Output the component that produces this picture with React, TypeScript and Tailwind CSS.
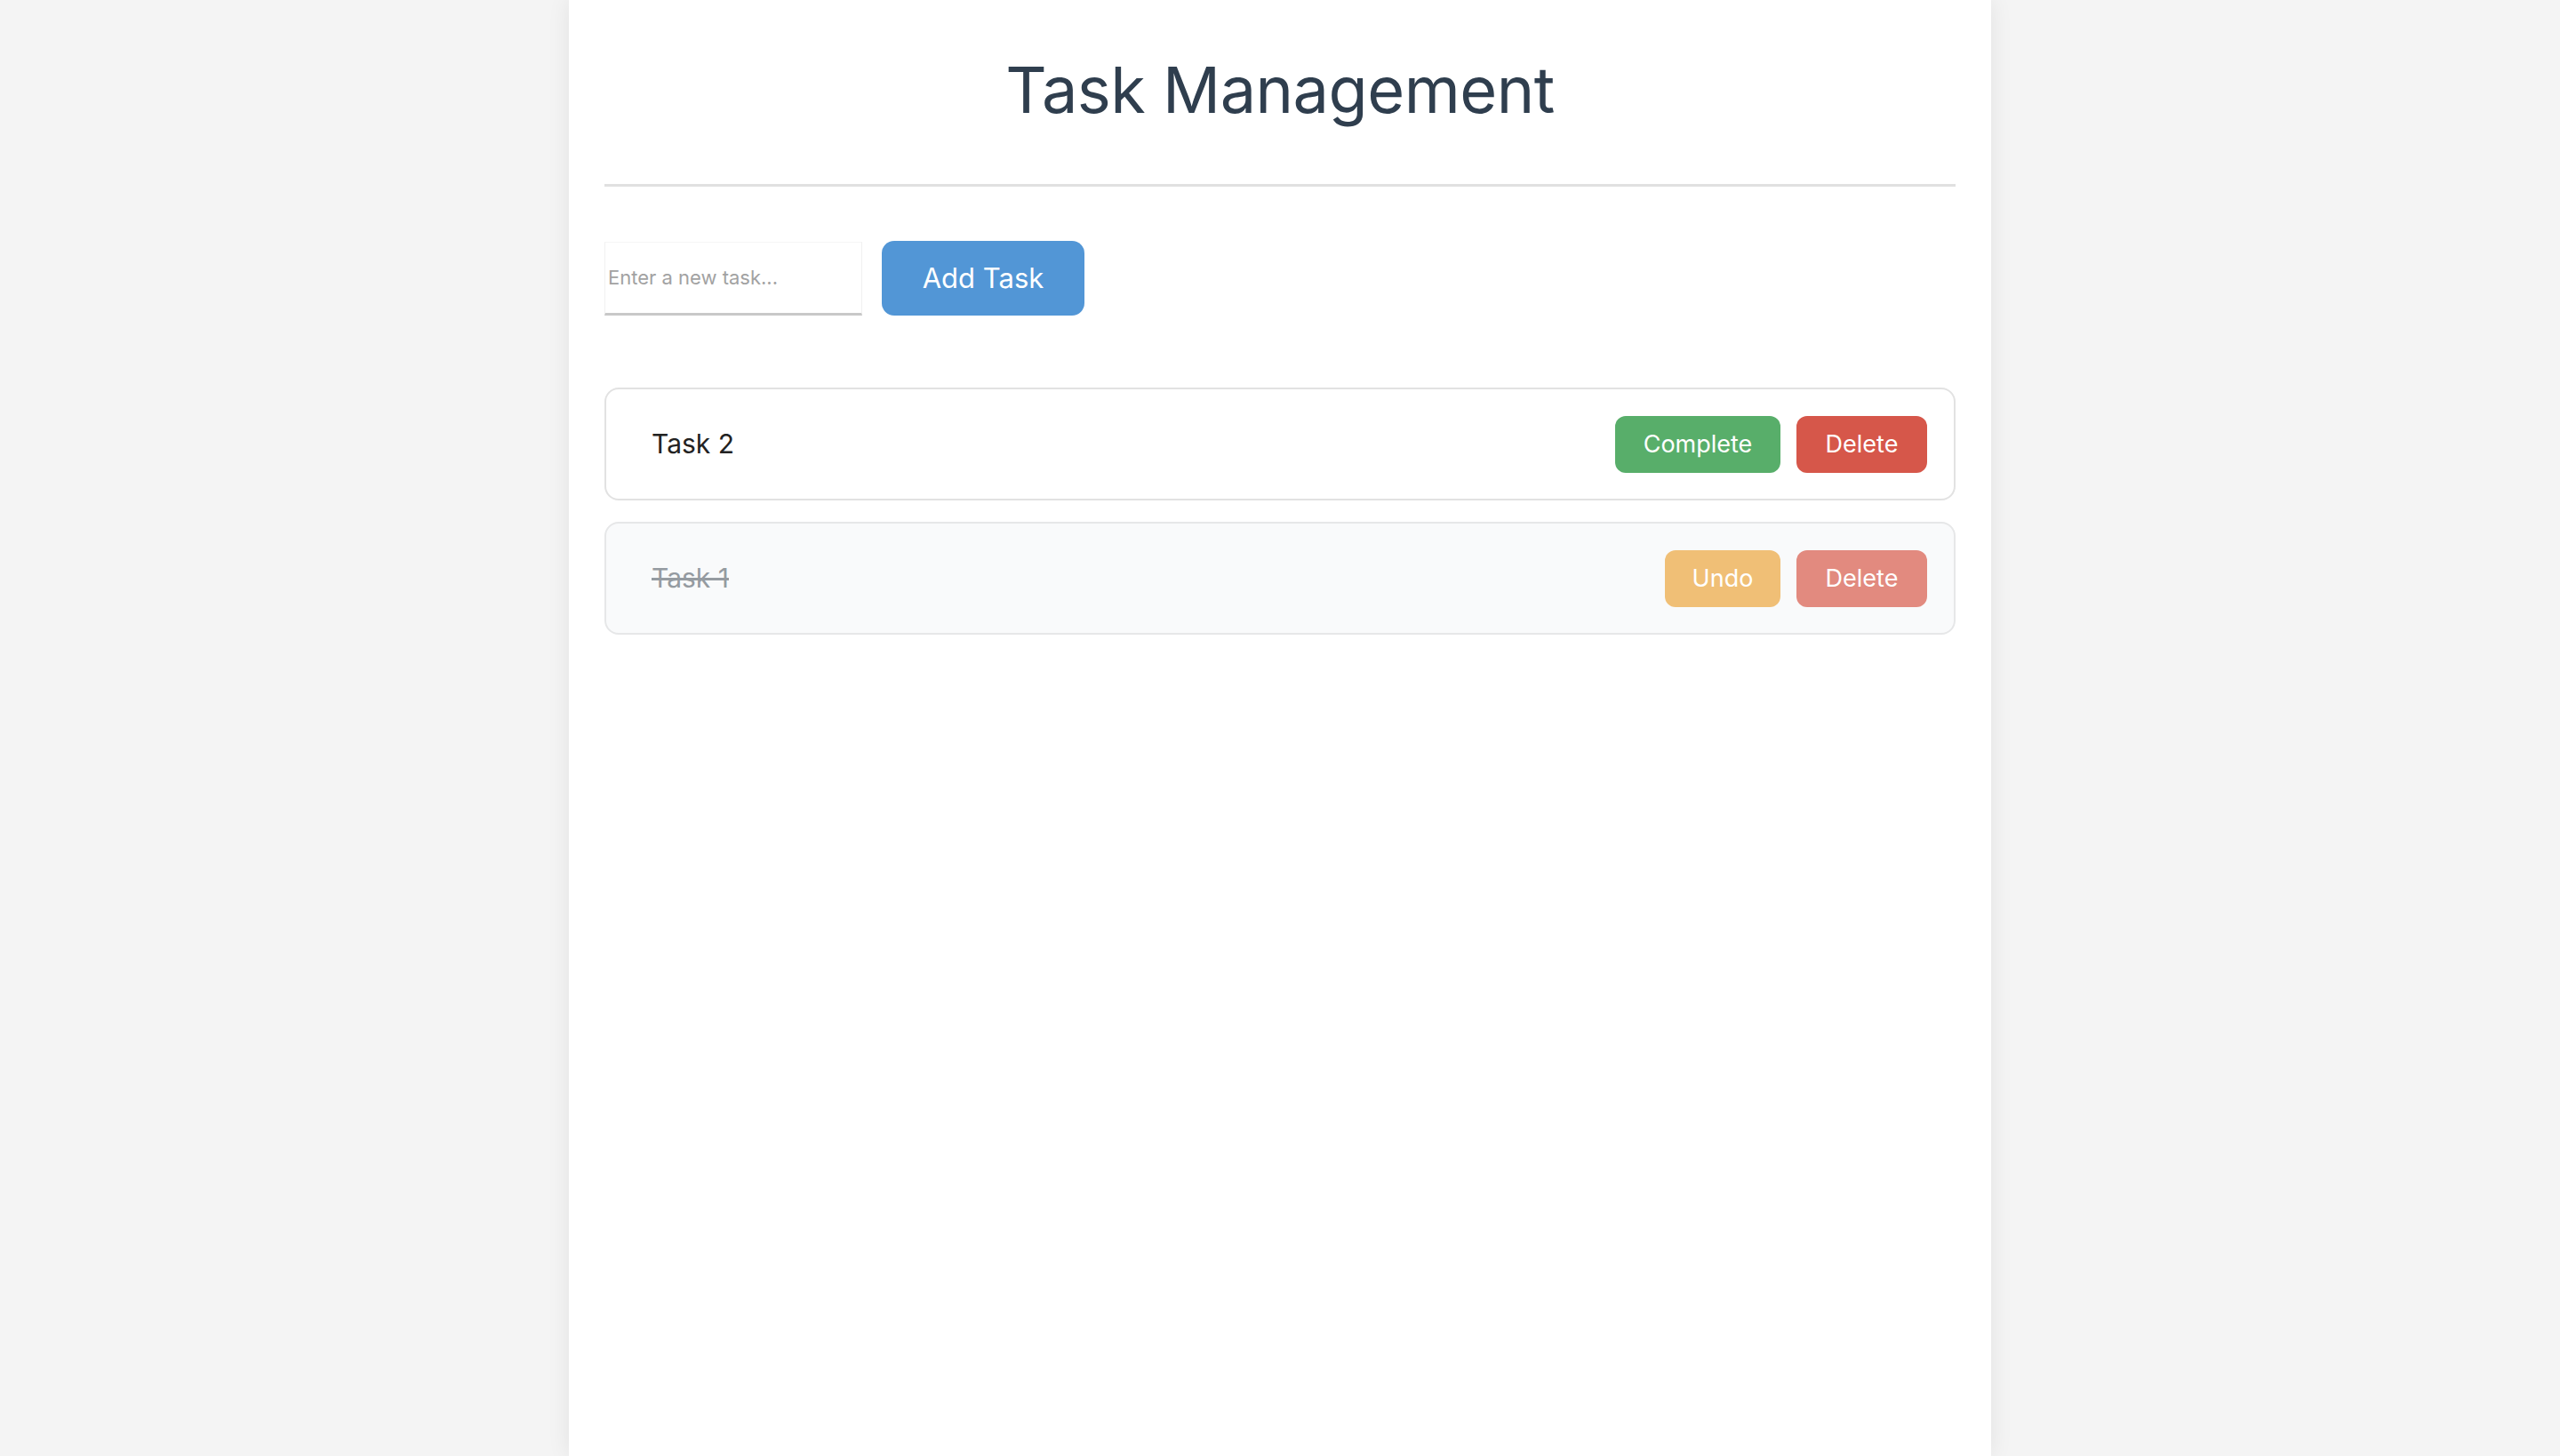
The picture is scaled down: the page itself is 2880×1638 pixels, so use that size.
import React from "react";

export default function App() {
  return (
    <div className="min-h-screen w-full bg-[#f4f4f4]" style={{ fontFamily: "Inter, 'Noto Sans', sans-serif" }}>
      <div className="mx-auto min-h-screen w-[1600px] bg-white px-[40px] shadow-[0_0_24px_rgba(0,0,0,0.08)]">
        <header className="border-b-[3px] border-[#e0e0e0] pt-[58px] pb-[63px] text-center">
          <h1 className="text-[72px] font-normal leading-[1.2] text-[#2f3e4e]" style={{ letterSpacing: "-0.5px" }}>
            Task Management
          </h1>
        </header>

        <div className="mt-[61px] flex items-center gap-[22px]">
          <input
            type="text"
            placeholder="Enter a new task..."
            className="h-[83px] w-[290px] border-x border-t border-x-[#f0f0f0] border-t-[#f6f6f6] border-b-[3px] border-b-[#c8c8c8] bg-white px-[3px] text-[22px] text-[#333] outline-none placeholder:text-[#a2a2a2]"
          />
          <button className="h-[84px] w-[228px] rounded-[14px] bg-[#5296d6] text-[31px] text-white">
            Add Task
          </button>
        </div>

        <div className="mt-[81px] flex flex-col gap-[24px]">
          <div className="flex h-[127px] items-center justify-between rounded-[16px] border-2 border-[#e2e2e2] bg-white pl-[51px] pr-[30px]">
            <span className="text-[30px] text-[#222]">Task 2</span>
            <div className="flex gap-[18px]">
              <button className="h-[64px] w-[186px] rounded-[12px] bg-[#58ae6a] text-[27px] text-white">
                Complete
              </button>
              <button className="h-[64px] w-[147px] rounded-[12px] bg-[#d6574a] text-[27px] text-white">
                Delete
              </button>
            </div>
          </div>

          <div className="flex h-[127px] items-center justify-between rounded-[16px] border-2 border-[#e6e7e8] bg-[#f9fafb] pl-[51px] pr-[30px]">
            <span className="text-[30px] text-[#959ba1] line-through">Task 1</span>
            <div className="flex gap-[18px]">
              <button className="h-[64px] w-[130px] rounded-[12px] bg-[#f0bf76] text-[27px] text-white">
                Undo
              </button>
              <button className="h-[64px] w-[147px] rounded-[12px] bg-[#e28a7f] text-[27px] text-white">
                Delete
              </button>
            </div>
          </div>
        </div>
      </div>
    </div>
  );
}
